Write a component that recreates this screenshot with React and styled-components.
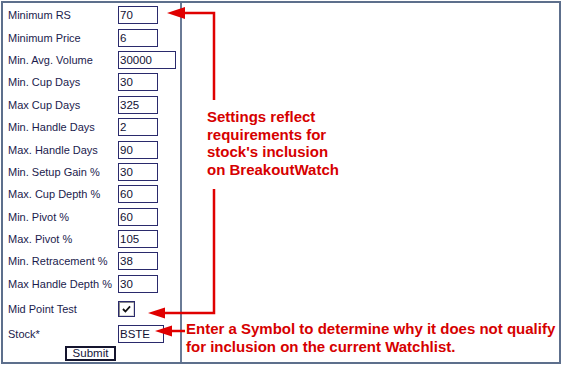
import styled, { createGlobalStyle } from "styled-components"

const Global = createGlobalStyle`
  html, body { margin: 0; padding: 0; background: #fff; }
  body { font-family: "Liberation Sans", Arial, sans-serif; }
`

const Page = styled.div`
  position: relative;
  width: 565px;
  height: 367px;
  padding: 1px;
  box-sizing: border-box;
`

const Frame = styled.div`
  display: grid;
  grid-template-columns: 179px 1fr;
  width: 560px;
  height: 363px;
  box-sizing: border-box;
  border: 2px solid #5d6f8c;
`

const FormCol = styled.div`
  display: flex;
  flex-direction: column;
  padding: 1px 0 0 5px;
  border-right: 2px solid #6a7b96;
`

const Row = styled.div`
  display: grid;
  grid-template-columns: 110px auto;
  align-items: center;
  height: ${(p) => p.h || 22.4}px;
`

const Label = styled.span`
  font-size: 11px;
  color: #1b1b4d;
  white-space: nowrap;
`

const Field = styled.div`
  width: ${(p) => p.w || 40}px;
  height: 18px;
  box-sizing: border-box;
  border: 1px solid #2a2a6c;
  padding: 0 1px;
  font-size: 11.5px;
  line-height: 17px;
  color: #111133;
  background: #fff;
`

const Check = styled.div`
  width: 17px;
  height: 16px;
  box-sizing: border-box;
  border: 1px solid #2a2a6c;
  display: flex;
  align-items: center;
  justify-content: center;
  background: #fff;
  box-shadow: inset 1px 1px 0 #8a8a8a, inset -1px -1px 0 #d8d8d8;
`

const SubmitRow = styled.div`
  display: flex;
  justify-content: center;
  padding-right: 7px;
`

const Submit = styled.div`
  width: 51px;
  height: 15px;
  box-sizing: border-box;
  border: 2px solid #15152e;
  font-size: 11.5px;
  line-height: 11px;
  text-align: center;
  color: #15153a;
  background: #fff;
`

const NoteCol = styled.div`
  display: flex;
  flex-direction: column;
`

const Note = styled.div`
  color: #d60000;
  font-weight: bold;
  font-size: 15px;
  line-height: ${(p) => p.lh}px;
  padding-left: ${(p) => p.pl}px;
  margin-top: ${(p) => p.mt}px;
`

const Overlay = styled.svg`
  position: absolute;
  left: 0;
  top: 0;
  pointer-events: none;
`

const fields = [
  ["Minimum RS", "70"],
  ["Minimum Price", "6"],
  ["Min. Avg. Volume", "30000", 58],
  ["Min. Cup Days", "30"],
  ["Max Cup Days", "325"],
  ["Min. Handle Days", "2"],
  ["Max. Handle Days", "90"],
  ["Min. Setup Gain %", "30"],
  ["Max. Cup Depth %", "60"],
  ["Min. Pivot %", "60"],
  ["Max. Pivot %", "105"],
  ["Min. Retracement %", "38"],
  ["Max Handle Depth %", "30"],
]

const red = "#e00000"

export default function App() {
  return (
    <Page>
      <Global />
      <Frame>
        <FormCol>
          {fields.map(([label, value, w]) => (
            <Row key={label}>
              <Label>{label}</Label>
              <Field w={w}>{value}</Field>
            </Row>
          ))}
          <Row h={27}>
            <Label>Mid Point Test</Label>
            <Check>
              <svg width="9" height="8" viewBox="0 0 10 9">
                <path d="M1 4.5 L3.8 7.3 L9 1.5" fill="none" stroke="#111" strokeWidth="2" />
              </svg>
            </Check>
          </Row>
          <Row h={24}>
            <Label>Stock*</Label>
            <Field w={46}>BSTE</Field>
          </Row>
          <SubmitRow>
            <Submit>Submit</Submit>
          </SubmitRow>
        </FormCol>
        <NoteCol>
          <Note lh={17.5} pl={25} mt={105}>
            Settings reflect
            <br />
            requirements for
            <br />
            stock's inclusion
            <br />
            on BreakoutWatch
          </Note>
          <Note lh={18} pl={4} mt={142}>
            Enter a Symbol to determine why it does not qualify
            <br />
            for inclusion on the current Watchlist.
          </Note>
        </NoteCol>
      </Frame>
      <Overlay width="565" height="367" viewBox="0 0 565 367">
        <polyline points="184,13 214,13 214,100" fill="none" stroke={red} strokeWidth="2.5" />
        <polygon points="167,13 185,7 185,19" fill={red} />
        <polyline points="214,189 214,313 164,313" fill="none" stroke={red} strokeWidth="2.5" />
        <polygon points="148,313 165,307.5 165,318.5" fill={red} />
        <line x1="171" y1="331" x2="185" y2="331" stroke={red} strokeWidth="2.5" />
        <polygon points="155,331 172,325.5 172,336.5" fill={red} />
      </Overlay>
    </Page>
  )
}
